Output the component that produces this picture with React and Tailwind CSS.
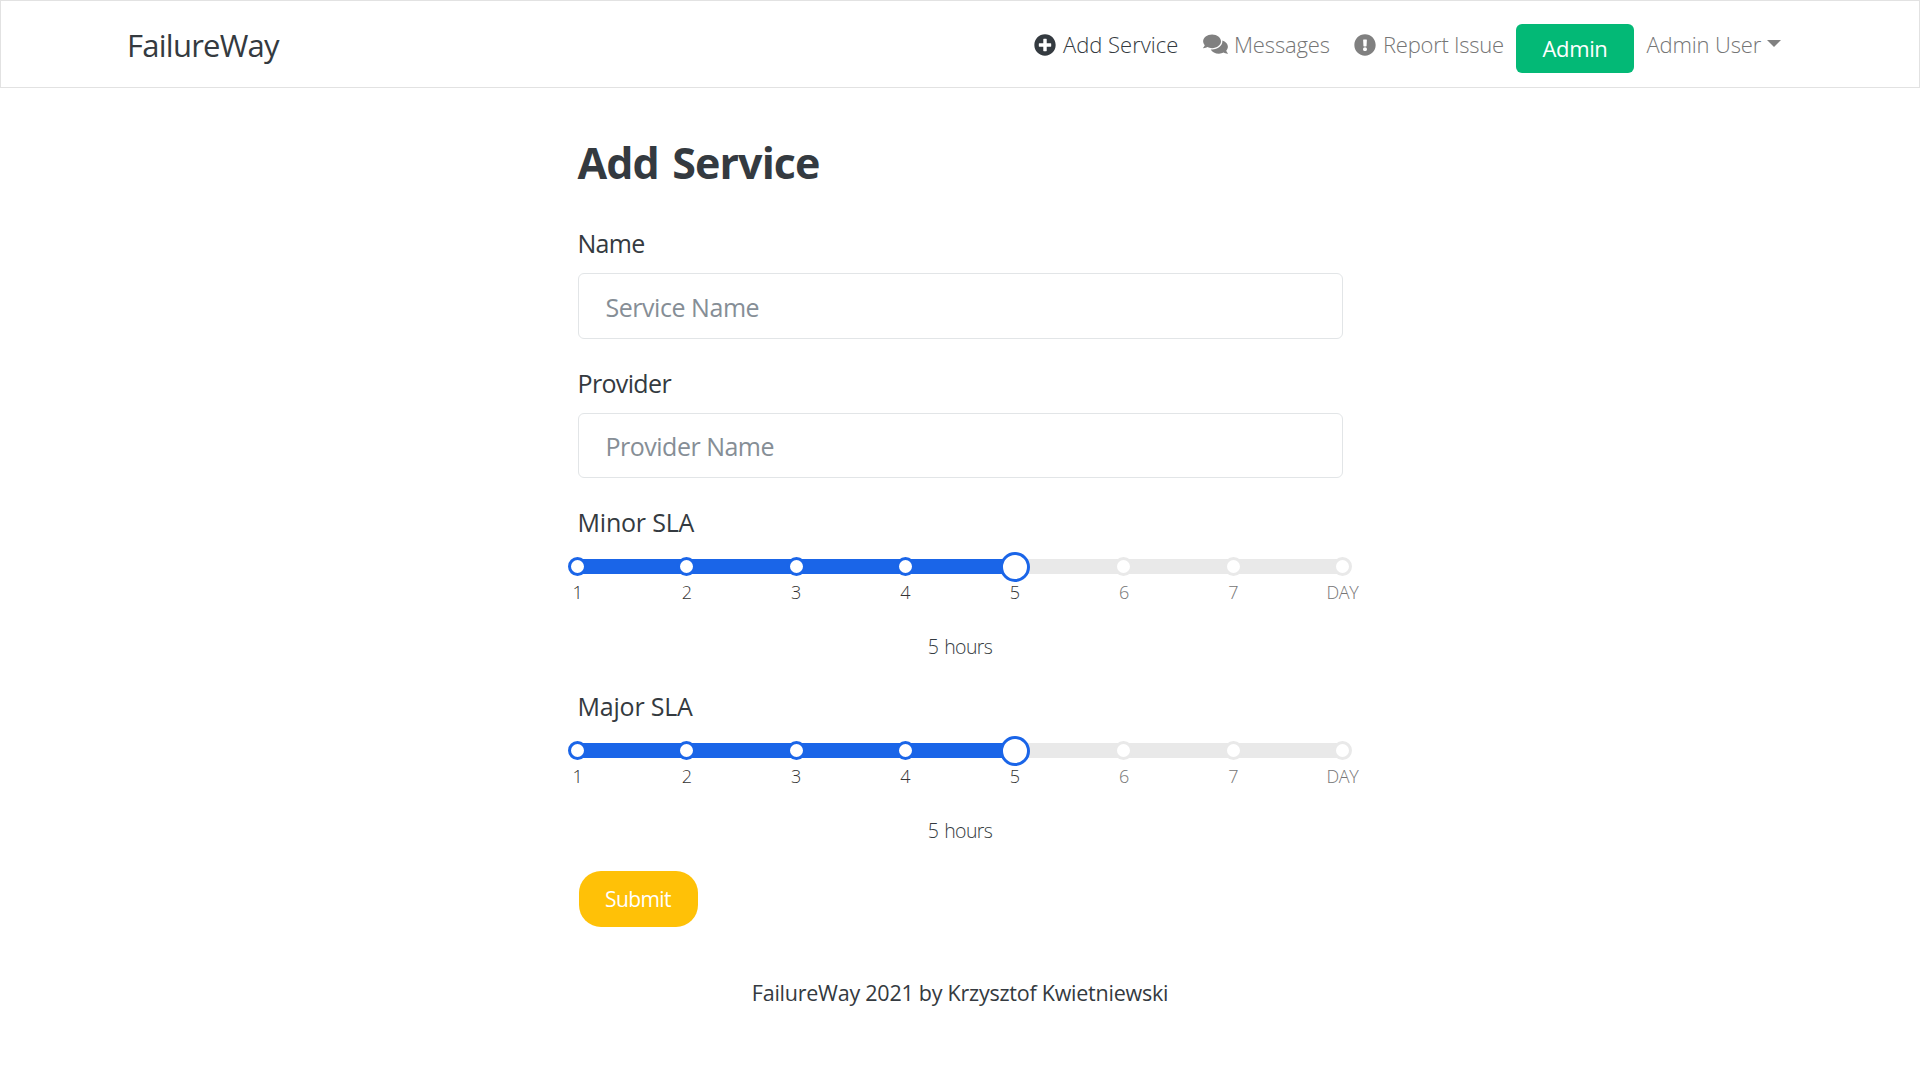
import { FaComments, FaExclamationCircle, FaPlusCircle } from "react-icons/fa";

const STOPS = ["1", "2", "3", "4", "5", "6", "7", "DAY"];

function Dot({ index, value }) {
  if (index === value) {
    return <span className="size-[30px] shrink-0 rounded-full border-3 border-[#1a65e8] bg-white" />;
  }
  return (
    <span
      className={
        "size-[19px] shrink-0 rounded-full border-3 bg-white " +
        (index < value ? "border-[#1a65e8]" : "border-[#e9e9e9]")
      }
    />
  );
}

function Slider({ label, value }) {
  return (
    <section>
      <h2 className="h-10 text-[25px] leading-10 tracking-[-0.2px]">{label}</h2>
      <div className="relative mt-[17px] h-[15px] bg-[#e9e9e9]">
        <div className="h-full bg-[#1a65e8]" style={{ width: `${(value / 7) * 100}%` }} />
        <div className="absolute inset-0 flex items-center justify-between">
          {STOPS.map((stop, i) => (
            <span key={stop} className="flex w-0 justify-center">
              <Dot index={i} value={value} />
            </span>
          ))}
        </div>
      </div>
      <div className="mt-1.5 flex h-6 justify-between text-[18px] font-light leading-6">
        {STOPS.map((stop, i) => (
          <span
            key={stop}
            className={
              "flex w-0 justify-center tracking-[-0.3px] " + (i <= value ? "text-[#333]" : "text-[#757575]")
            }
          >
            {stop}
          </span>
        ))}
      </div>
      <p className="mt-[28px] h-[30px] text-center text-[19.5px] font-light leading-[30px] tracking-[-0.6px] text-[#343a40] [word-spacing:1.5px]">
        5 hours
      </p>
    </section>
  );
}

export default function App() {
  return (
    <div className="min-h-screen bg-white font-['Open_Sans','Noto_Sans',sans-serif] text-[#343a40]">
      <header className="flex h-[88px] items-start border border-[#e2e2e2] pl-[126px]">
        <a className="mt-[22px] w-[905px] whitespace-nowrap text-[31px] leading-[44px] tracking-[-0.75px]">FailureWay</a>
        <nav className="flex items-start whitespace-nowrap text-[22px] font-light leading-9 text-[#757575]">
          <a className="mt-[25px] flex h-9 w-[171px] text-[#343a40]">
            <FaPlusCircle className="ml-[2px] mr-[7px] mt-2 size-[22px]" />
            Add Service
          </a>
          <a className="mt-[25px] flex h-9 w-[150px] tracking-[-0.15px]">
            <FaComments className="mr-[6px] mt-[7px] h-[22px] w-[25px] text-[#808080]" />
            Messages
          </a>
          <a className="mt-[25px] flex h-9 w-[163px] tracking-[-0.25px]">
            <FaExclamationCircle className="ml-px mr-[7px] mt-2 size-[22px] text-[#808080]" />
            Report Issue
          </a>
          <a className="mt-[23px] flex h-[49px] w-[118px] items-center justify-center rounded-md bg-[#03b976] pb-0.5 font-normal tracking-[-0.4px] text-white">
            Admin
          </a>
          <a className="ml-[12.5px] mt-[25px] flex h-9 tracking-[-0.15px]">
            Admin User
            <svg viewBox="0 0 14 7" className="ml-[5.5px] mt-[14px] h-[7px] w-[14px] fill-[#808080]">
              <path d="M0 0H14L7 7Z" />
            </svg>
          </a>
        </nav>
      </header>

      <main className="mx-auto mt-[45px] w-[765px]">
        <h1 className="h-15 text-[43px] font-bold leading-[60px] tracking-[-0.9px] [word-spacing:3px]">Add Service</h1>
        <label className="mt-[30px] block h-10 text-[25px] leading-10 tracking-[-0.7px]">Name</label>
        <input
          placeholder="Service Name"
          className="mt-2.5 block h-[66px] w-full rounded-md border border-[#e2e5e7] px-[27px] pt-0.5 text-[25px] tracking-[-0.46px] placeholder:text-[#868e96]"
        />
        <label className="mt-6 block h-10 text-[25px] leading-10 tracking-[-0.65px]">Provider</label>
        <input
          placeholder="Provider Name"
          className="mb-6 mt-2.5 block h-[65px] w-full rounded-md border border-[#e2e5e7] px-[27px] text-[25px] tracking-[-0.5px] placeholder:text-[#868e96]"
        />
        <div className="flex flex-col gap-6">
          <Slider label="Minor SLA" value={4} />
          <Slider label="Major SLA" value={4} />
        </div>
        <button className="ml-px mt-[25px] flex h-14 w-[119px] items-center justify-center rounded-[22px] bg-[#ffc107] pt-0.5 text-[21px] tracking-[-0.6px] text-white">
          Submit
        </button>
      </main>

      <footer className="mt-[51px] h-[30px] text-center text-[21.5px] leading-[30px] tracking-[-0.24px]">
        FailureWay 2021 by Krzysztof Kwietniewski
      </footer>
    </div>
  );
}
